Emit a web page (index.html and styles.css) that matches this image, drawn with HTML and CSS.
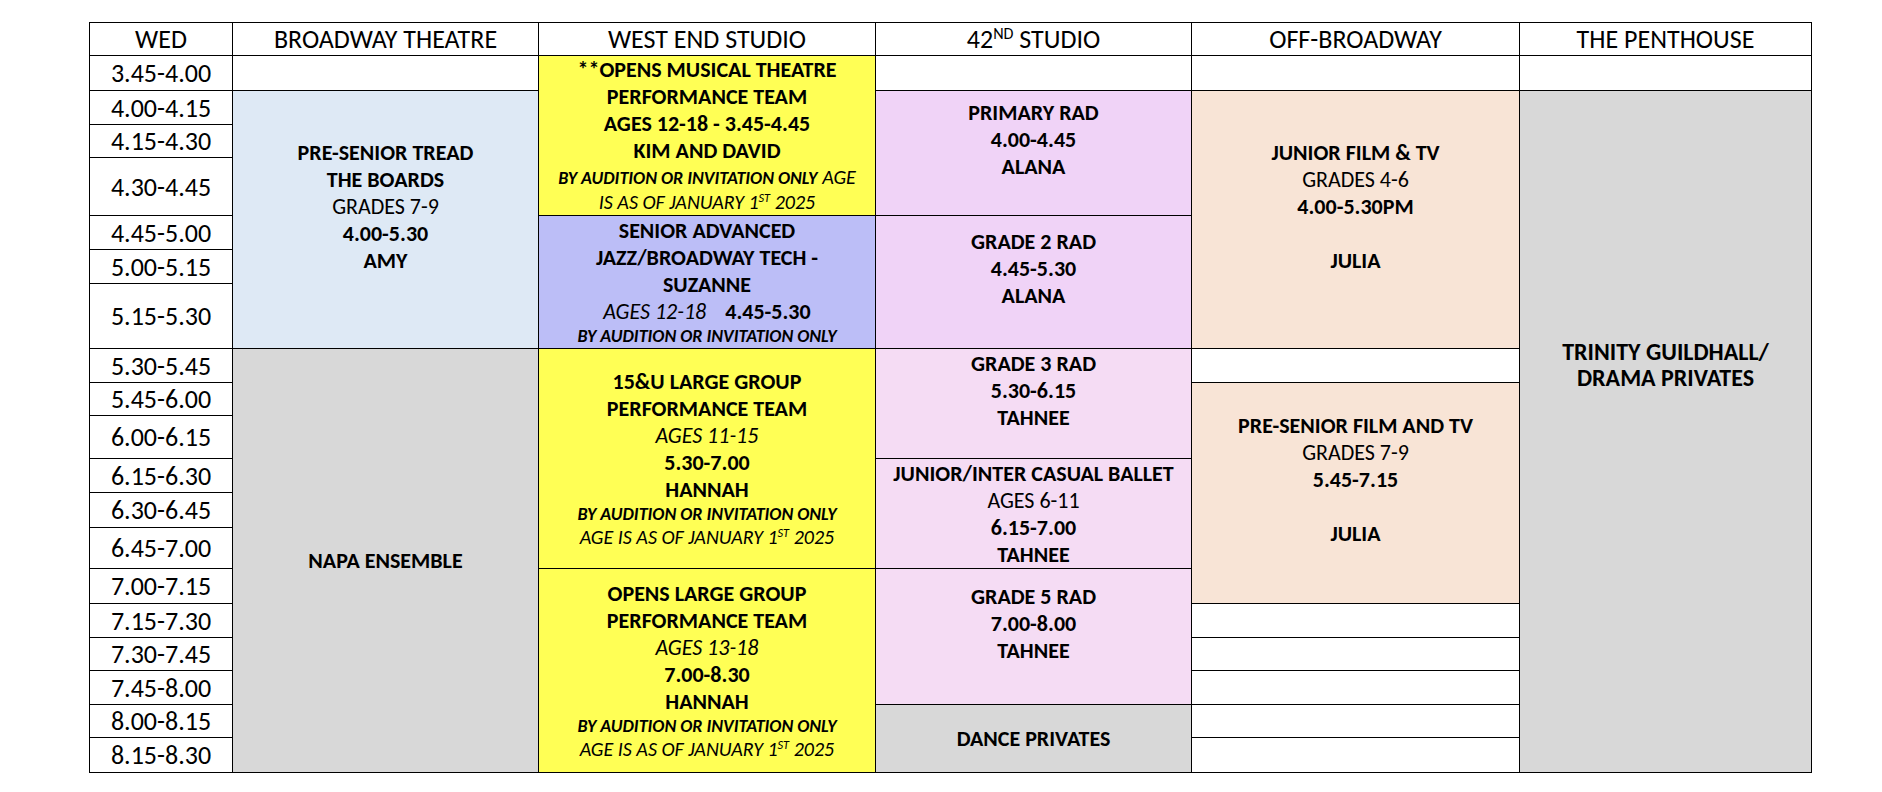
FILE: index.html
```html
<!DOCTYPE html>
<html lang="en">
<head>
<meta charset="utf-8">
<title>Wednesday Timetable</title>
<link rel="stylesheet" href="styles.css">
</head>
<body>
<main class="page">
  <div class="schedule">
    <!-- header -->
    <div class="cell hd"><span class="ln">WED</span></div>
    <div class="cell hd"><span class="ln">BROADWAY THEATRE</span></div>
    <div class="cell hd"><span class="ln">WEST END STUDIO</span></div>
    <div class="cell hd"><span class="ln">42<sup>ND</sup> STUDIO</span></div>
    <div class="cell hd"><span class="ln">OFF-BROADWAY</span></div>
    <div class="cell hd"><span class="ln">THE PENTHOUSE</span></div>

    <!-- 3.45 -->
    <div class="cell tm">3.45-4.00</div>
    <div class="cell"></div>
    <div class="cell yellow r4">
      <div class="ln b">**OPENS MUSICAL THEATRE</div>
      <div class="ln b">PERFORMANCE TEAM</div>
      <div class="ln b">AGES 12-18 - 3.45-4.45</div>
      <div class="ln b">KIM AND DAVID</div>
      <div class="ln mix"><span class="note">BY AUDITION OR INVITATION ONLY</span> <span class="age">AGE</span></div>
      <div class="ln age">IS AS OF JANUARY 1<sup>ST</sup> 2025</div>
    </div>
    <div class="cell"></div>
    <div class="cell"></div>
    <div class="cell"></div>

    <!-- 4.00 -->
    <div class="cell tm">4.00-4.15</div>
    <div class="cell blue r6 lift">
      <div class="ln b">PRE-SENIOR TREAD</div>
      <div class="ln b">THE BOARDS</div>
      <div class="ln">GRADES 7-9</div>
      <div class="ln b">4.00-5.30</div>
      <div class="ln b">AMY</div>
    </div>
    <div class="cell violet r3 lift">
      <div class="ln b">PRIMARY RAD</div>
      <div class="ln b">4.00-4.45</div>
      <div class="ln b">ALANA</div>
    </div>
    <div class="cell peach r6 lift">
      <div class="ln b">JUNIOR FILM &amp; TV</div>
      <div class="ln">GRADES 4-6</div>
      <div class="ln b">4.00-5.30PM</div>
      <div class="ln">&nbsp;</div>
      <div class="ln b">JULIA</div>
    </div>
    <div class="cell grey r18 trinity">
      <div class="ln">TRINITY GUILDHALL/</div>
      <div class="ln">DRAMA PRIVATES</div>
    </div>

    <!-- 4.15 -->
    <div class="cell tm">4.15-4.30</div>
    <!-- 4.30 -->
    <div class="cell tm">4.30-4.45</div>

    <!-- 4.45 -->
    <div class="cell tm">4.45-5.00</div>
    <div class="cell lavender r3">
      <div class="ln b">SENIOR ADVANCED</div>
      <div class="ln b">JAZZ/BROADWAY TECH -</div>
      <div class="ln b">SUZANNE</div>
      <div class="ln"><i>AGES 12-18</i> <b class="gap">4.45-5.30</b></div>
      <div class="ln note">BY AUDITION OR INVITATION ONLY</div>
    </div>
    <div class="cell violet r3 lift">
      <div class="ln b">GRADE 2 RAD</div>
      <div class="ln b">4.45-5.30</div>
      <div class="ln b">ALANA</div>
    </div>

    <!-- 5.00 -->
    <div class="cell tm">5.00-5.15</div>
    <!-- 5.15 -->
    <div class="cell tm">5.15-5.30</div>

    <!-- 5.30 -->
    <div class="cell tm">5.30-5.45</div>
    <div class="cell grey r12">
      <div class="ln b">NAPA ENSEMBLE</div>
    </div>
    <div class="cell yellow r6">
      <div class="ln b">15&amp;U LARGE GROUP</div>
      <div class="ln b">PERFORMANCE TEAM</div>
      <div class="ln i">AGES 11-15</div>
      <div class="ln b">5.30-7.00</div>
      <div class="ln b">HANNAH</div>
      <div class="ln note">BY AUDITION OR INVITATION ONLY</div>
      <div class="ln age">AGE IS AS OF JANUARY 1<sup>ST</sup> 2025</div>
    </div>
    <div class="cell pink r3 lift">
      <div class="ln b">GRADE 3 RAD</div>
      <div class="ln b">5.30-6.15</div>
      <div class="ln b">TAHNEE</div>
    </div>
    <div class="cell"></div>

    <!-- 5.45 -->
    <div class="cell tm">5.45-6.00</div>
    <div class="cell peach r6 lift">
      <div class="ln b">PRE-SENIOR FILM AND TV</div>
      <div class="ln">GRADES 7-9</div>
      <div class="ln b">5.45-7.15</div>
      <div class="ln">&nbsp;</div>
      <div class="ln b">JULIA</div>
    </div>

    <!-- 6.00 -->
    <div class="cell tm">6.00-6.15</div>

    <!-- 6.15 -->
    <div class="cell tm">6.15-6.30</div>
    <div class="cell pink r3">
      <div class="ln b">JUNIOR/INTER CASUAL BALLET</div>
      <div class="ln">AGES 6-11</div>
      <div class="ln b">6.15-7.00</div>
      <div class="ln b">TAHNEE</div>
    </div>

    <!-- 6.30 -->
    <div class="cell tm">6.30-6.45</div>
    <!-- 6.45 -->
    <div class="cell tm">6.45-7.00</div>

    <!-- 7.00 -->
    <div class="cell tm">7.00-7.15</div>
    <div class="cell yellow r6">
      <div class="ln b">OPENS LARGE GROUP</div>
      <div class="ln b">PERFORMANCE TEAM</div>
      <div class="ln i">AGES 13-18</div>
      <div class="ln b">7.00-8.30</div>
      <div class="ln b">HANNAH</div>
      <div class="ln note">BY AUDITION OR INVITATION ONLY</div>
      <div class="ln age">AGE IS AS OF JANUARY 1<sup>ST</sup> 2025</div>
    </div>
    <div class="cell pink r4 lift">
      <div class="ln b">GRADE 5 RAD</div>
      <div class="ln b">7.00-8.00</div>
      <div class="ln b">TAHNEE</div>
    </div>

    <!-- 7.15 -->
    <div class="cell tm">7.15-7.30</div>
    <div class="cell"></div>
    <!-- 7.30 -->
    <div class="cell tm">7.30-7.45</div>
    <div class="cell"></div>
    <!-- 7.45 -->
    <div class="cell tm">7.45-8.00</div>
    <div class="cell"></div>

    <!-- 8.00 -->
    <div class="cell tm">8.00-8.15</div>
    <div class="cell grey r2">
      <div class="ln b">DANCE PRIVATES</div>
    </div>
    <div class="cell"></div>

    <!-- 8.15 -->
    <div class="cell tm">8.15-8.30</div>
    <div class="cell"></div>
  </div>
</main>
</body>
</html>
```

FILE: styles.css
```css
html, body {
  margin: 0;
  padding: 0;
  background: #ffffff;
}

body {
  font-family: "Carlito", "Lato", "Liberation Sans", sans-serif;
  font-size: 22px;
  color: #000000;
}

.page {
  padding: 22px 0 0 89px;
}

.schedule {
  display: grid;
  width: max-content;
  grid-template-columns: 142px 305px 336px 315px 327px 291px;
  grid-template-rows: 32px 34px 33px 32px 57px 33px 33px 64px 33px 32px 42px 33px 34px 40px 34px 33px 32px 33px 32px 34px;
  gap: 1px;
  padding: 1px;
  background: #000000;
}

.cell {
  background: #ffffff;
  display: flex;
  flex-direction: column;
  justify-content: center;
  align-items: center;
  text-align: center;
  line-height: 27px;
  min-width: 0;
  min-height: 0;
}

.r2 { grid-row: span 2; }
.r3 { grid-row: span 3; }
.r4 { grid-row: span 4; }
.r6 { grid-row: span 6; }
.r12 { grid-row: span 12; }
.r18 { grid-row: span 18; }

.lift { padding-bottom: 27px; }

.ln { white-space: nowrap; }

.b { font-weight: 700; }
.i { font-style: italic; }

.gap { margin-left: 14px; }

.note {
  font-size: 18px;
  font-weight: 700;
  font-style: italic;
  line-height: 22px;
}

.age {
  font-size: 20px;
  font-style: italic;
  line-height: 25px;
}

.mix { line-height: 26px; }

sup {
  font-size: 0.62em;
  line-height: 0;
  vertical-align: 0.55em;
}

.hd,
.tm {
  font-size: 26px;
  font-weight: 400;
  line-height: 30px;
  white-space: nowrap;
}

.trinity {
  font-size: 24px;
  font-weight: 700;
  line-height: 26px;
  padding-bottom: 134px;
}

.yellow { background: #ffff55; }
.blue { background: #dee9f5; }
.lavender { background: #bcbef7; }
.violet { background: #f0d3f7; }
.pink { background: #f5dcf4; }
.peach { background: #f8e4d6; }
.grey { background: #d8d8d8; }
```
